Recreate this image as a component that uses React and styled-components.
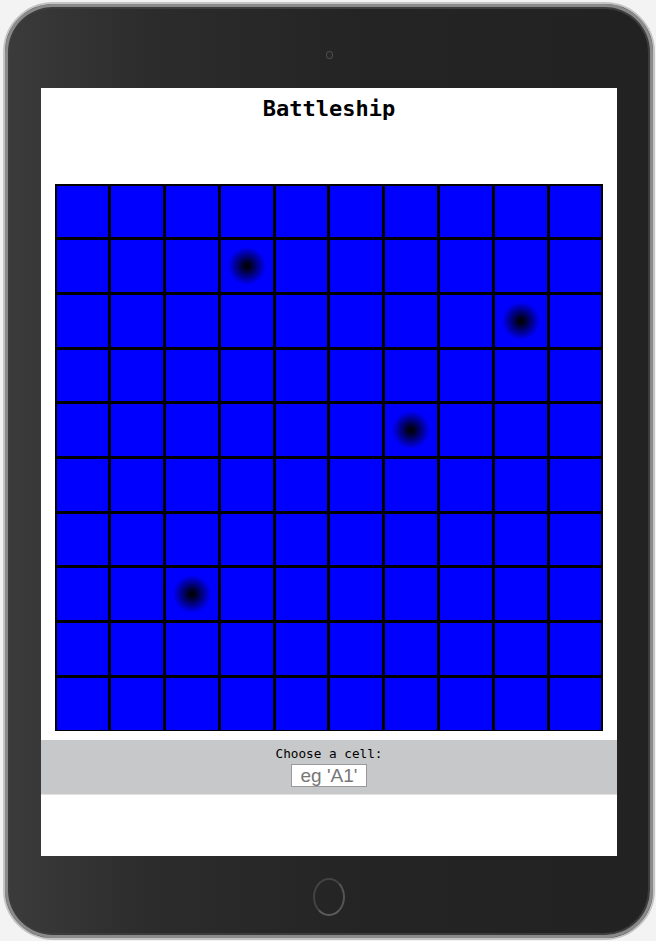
import React from "react";
import styled, { createGlobalStyle } from "styled-components";

const Global = createGlobalStyle`
  html, body { margin: 0; padding: 0; background: #f3f3f3; }
  body { font-family: "Liberation Sans", Arial, sans-serif; overflow: hidden; }
  #root { width: 656px; height: 941px; }
`;

const Device = styled.div`
  box-sizing: border-box;
  width: 652px;
  height: 938px;
  margin: 2px 0 0 3px;
  border-radius: 50px;
  border: 2px solid #c4c4c4;
  background: linear-gradient(90deg, #3b3b3b 0%, #2c2c2c 22%, #242424 55%, #222222 100%);
  box-shadow: inset 0 0 0 3px #8a8a8a, inset 0 0 0 5px #3c3c3c;
  display: flex;
  flex-direction: column;
  align-items: center;
`;

const TopBezel = styled.div`
  height: 84px;
  width: 100%;
  box-sizing: border-box;
  padding-top: 47px;
  display: flex;
  justify-content: center;
  align-items: flex-start;
`;

const Camera = styled.div`
  width: 7px;
  height: 8px;
  border-radius: 50%;
  border: 1px solid #4e4e4e;
  background: #262626;
  box-sizing: border-box;
`;

const BottomBezel = styled.div`
  flex: 1;
  width: 100%;
  display: flex;
  justify-content: center;
  align-items: center;
`;

const HomeButton = styled.div`
  width: 32px;
  height: 38px;
  border-radius: 50%;
  border: 2px solid #434343;
  border-bottom-color: #5c5c5c;
  border-right-color: #555;
  box-sizing: border-box;
`;

const Screen = styled.div`
  width: 576px;
  height: 768px;
  background: #ffffff;
  display: flex;
  flex-direction: column;
  align-items: center;
`;

const Title = styled.h1`
  margin: 0;
  padding-top: 8px;
  font-family: "DejaVu Sans Mono", "Liberation Mono", monospace;
  font-size: 22px;
  font-weight: bold;
  line-height: 26px;
  color: #000;
`;

const Board = styled.div`
  box-sizing: border-box;
  margin-top: 62px;
  width: 548px;
  height: 547px;
  padding: 1.5px;
  background: #000;
  display: grid;
  grid-template-columns: repeat(10, 1fr);
  grid-auto-rows: 1fr;
  gap: 3px;
`;

const Cell = styled.div`
  background: ${(p) =>
    p.$hit
      ? "radial-gradient(circle at center, #000 0px, #00001a 3px, #0000ff 19px)"
      : "#0000ff"};
`;

const Controls = styled.div`
  box-sizing: border-box;
  margin-top: 9px;
  width: 100%;
  height: 55px;
  background: #c7c8c9;
  border-bottom: 1px solid #e2e2e2;
  padding-top: 6px;
  display: flex;
  flex-direction: column;
  align-items: center;
`;

const Label = styled.label`
  font-family: "DejaVu Sans Mono", "Liberation Mono", monospace;
  font-size: 12.7px;
  line-height: 16px;
  color: #000;
`;

const Input = styled.input`
  box-sizing: border-box;
  margin-top: 2px;
  width: 76px;
  height: 23px;
  border: 1px solid #9a9a9a;
  background: #fff;
  padding: 0 6px;
  font-family: "Liberation Sans", Arial, sans-serif;
  font-size: 19px;
  text-align: center;
  color: #000;
  outline: none;
  &::placeholder { color: #777; }
`;

const hits = new Set(["1-3", "2-8", "4-6", "7-2"]);

export default function App() {
  const cells = [];
  for (let r = 0; r < 10; r++) {
    for (let c = 0; c < 10; c++) {
      cells.push(<Cell key={`${r}-${c}`} $hit={hits.has(`${r}-${c}`)} />);
    }
  }
  return (
    <>
      <Global />
      <Device>
        <TopBezel>
          <Camera />
        </TopBezel>
        <Screen>
          <Title>Battleship</Title>
          <Board>{cells}</Board>
          <Controls>
            <Label htmlFor="cell">Choose a cell:</Label>
            <Input id="cell" placeholder="eg 'A1'" />
          </Controls>
        </Screen>
        <BottomBezel>
          <HomeButton />
        </BottomBezel>
      </Device>
    </>
  );
}
